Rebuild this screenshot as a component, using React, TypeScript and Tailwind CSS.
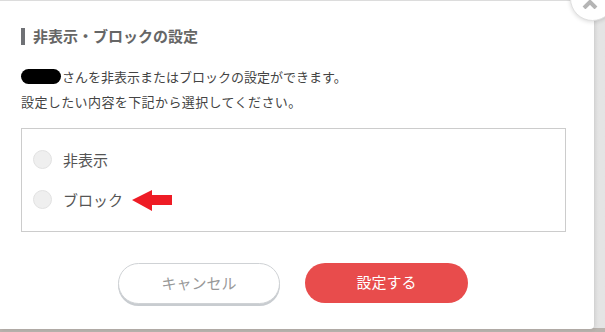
import React from "react";

const FONT = { fontFamily: '"Noto Sans CJK JP", "Noto Sans", sans-serif' };

function Radio({ label }: { label: string }) {
  return (
    <label className="flex h-[20px] items-center gap-[11px]">
      <span className="h-[19px] w-[19px] shrink-0 rounded-full border border-[#e2e2e2] bg-[#efefef]" />
      <span className="text-[15px] leading-[20px] text-[#555]">{label}</span>
    </label>
  );
}

function RedArrow() {
  return (
    <svg width="40" height="22" viewBox="0 0 40 22" className="ml-[9px]">
      <polygon
        points="0,11 20,1 20,6 40,6 40,16 20,16 20,22"
        fill="#ee1c25"
      />
    </svg>
  );
}

export default function App() {
  return (
    <div
      className="relative h-[332px] w-[605px] overflow-hidden bg-gradient-to-r from-[#f4f4f4] to-[#e4e4e4]"
      style={FONT}
    >
      {/* backdrop strip under the dialog */}
      <div className="absolute bottom-0 left-0 h-[4px] w-full bg-[#b9b3ae]" />

      <div className="relative h-[329px] w-[594px] rounded-br-[4px] border-t border-[#dcdcdc] bg-white px-[21px] pt-[24px] shadow-[1px_0_4px_rgba(0,0,0,0.12)]">
        {/* Title */}
        <div className="flex items-center gap-[8px]">
          <span className="h-[17px] w-[4px] bg-[#6f7175]" />
          <h2 className="text-[15px] font-bold text-[#666]">非表示・ブロックの設定</h2>
        </div>

        {/* Description */}
        <div className="mt-[16px] text-[13px] leading-[25px] text-[#444]">
          <p className="flex items-center">
            <span className="mr-[1px] inline-block h-[15px] w-[40px] rounded-full bg-black" />
            さんを非表示またはブロックの設定ができます。
          </p>
          <p className="tracking-[0.4px]">設定したい内容を下記から選択してください。</p>
        </div>

        {/* Options */}
        <div className="mt-[14px] flex h-[104px] w-[545px] flex-col gap-[20px] border border-[#cccccc] pl-[11px] pt-[21px]">
          <Radio label="非表示" />
          <div className="flex h-[20px] items-center">
            <Radio label="ブロック" />
            <RedArrow />
          </div>
        </div>

        {/* Buttons */}
        <div className="mt-[31px] flex justify-center gap-[25px] pr-[8px]">
          <button className="h-[41px] w-[162px] rounded-full border border-[#cfd2d5] bg-white text-[15px] text-[#999] shadow-[0_2px_0_#c8ccd0]">
            キャンセル
          </button>
          <button className="h-[40px] w-[163px] rounded-full bg-[#e84c4c] text-[15px] text-white">
            設定する
          </button>
        </div>
      </div>

      {/* Close button */}
      <div className="absolute left-[570px] top-[-24px] flex h-[45px] w-[45px] items-start justify-center rounded-full border border-[#e0e0e0] bg-white pt-[22px] shadow-[0_1px_4px_rgba(0,0,0,0.15)]">
        <svg width="16" height="10" viewBox="0 0 16 10" className="-ml-[6px]">
          <path d="M2 9 L8 3 L14 9" stroke="#b5b5b5" strokeWidth="4" fill="none" />
        </svg>
      </div>
    </div>
  );
}
